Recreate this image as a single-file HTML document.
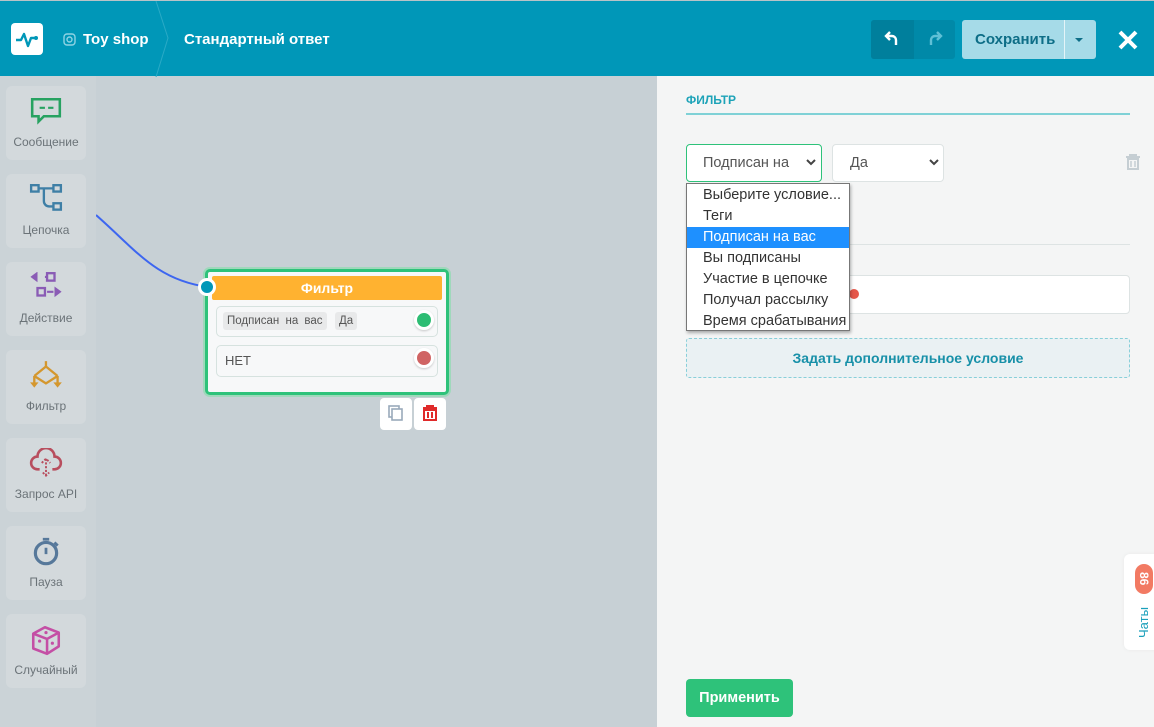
<!DOCTYPE html>
<html><head><meta charset="utf-8"><style>
*{box-sizing:border-box;margin:0;padding:0}
body{width:1154px;height:727px;overflow:hidden;font-family:"Liberation Sans","DejaVu Sans",sans-serif;background:#c7d0d5;position:relative}
.hdr{position:absolute;left:0;top:0;width:1154px;height:76px;background:#0097b8;border-top:1px solid #b9c3c7}
.abs{position:absolute}
.side{position:absolute;left:0;top:76px;width:96px;height:651px;background:#cbd3d7}
.tool{position:absolute;left:6px;width:80px;height:74px;background:#d3d9dc;border-radius:6px;text-align:center;font-size:12px;color:#6b7378}
.tool span{position:absolute;left:0;right:0;top:49px}
.tool svg{position:absolute;left:23px;top:10px}
.panel{position:absolute;left:657px;top:76px;width:497px;height:651px;background:#f4f5f5}
.opt{height:21px;line-height:21px;padding-left:16px;font-size:14.5px;color:#333}
</style></head><body>
<div class="hdr">
 <div class="abs" style="left:11px;top:22px;width:32px;height:32px;background:#fff;border-radius:4px">
  <svg width="32" height="32" viewBox="0 0 32 32"><path d="M5 17h5l3-6 4 12 3-8h5" fill="none" stroke="#0097b8" stroke-width="2.4" stroke-linejoin="round"/><circle cx="25" cy="15" r="2" fill="#0097b8"/></svg>
 </div>
 <svg class="abs" style="left:63px;top:32px" width="13" height="13" viewBox="0 0 13 13"><rect x="1" y="1" width="11" height="11" rx="3" fill="none" stroke="#8fd3e3" stroke-width="1.4"/><circle cx="6.5" cy="6.5" r="2.5" fill="none" stroke="#8fd3e3" stroke-width="1.4"/></svg>
 <div class="abs" style="left:83px;top:30px;color:#fff;font-size:15px;font-weight:bold">Toy shop</div>
 <svg class="abs" style="left:150px;top:0" width="20" height="76"><path d="M6 0L18 37L6 76" fill="none" stroke="#2aaac6" stroke-width="1"/></svg>
 <div class="abs" style="left:184px;top:30px;color:#fff;font-size:15px;font-weight:bold">Стандартный ответ</div>
 <div class="abs" style="left:871px;top:19px;width:84px;height:39px;background:#0089a8;border-radius:3px"></div>
 <div class="abs" style="left:871px;top:19px;width:43px;height:39px;background:#007f9c;border-radius:3px 0 0 3px"></div>
 <svg class="abs" style="left:884px;top:28px" width="18" height="20" viewBox="0 0 18 20"><path d="M6 3L2 7l4 4M2 7h6a4 4 0 0 1 4 4v5" fill="none" stroke="#fff" stroke-width="2.4"/></svg>
 <svg class="abs" style="left:925px;top:28px" width="18" height="20" viewBox="0 0 18 20"><path d="M12 3l4 4-4 4M16 7h-6a4 4 0 0 0-4 4v5" fill="none" stroke="#5fc0d6" stroke-width="2.4"/></svg>
 <div class="abs" style="left:962px;top:19px;width:134px;height:39px;background:#a6dbe8;border-radius:3px"></div>
 <div class="abs" style="left:1064px;top:19px;width:1px;height:39px;background:#e4f4f8"></div>
 <div class="abs" style="left:975px;top:30px;color:#0d6e87;font-size:15px;font-weight:bold">Сохранить</div>
 <div class="abs" style="left:1075px;top:37px;border-left:4px solid transparent;border-right:4px solid transparent;border-top:4px solid #0d6e87"></div>
 <svg class="abs" style="left:1117px;top:28px" width="22" height="22" viewBox="0 0 22 22"><path d="M3 3L19 19M19 3L3 19" stroke="#fff" stroke-width="4"/></svg>
</div>

<div class="side">
 <div class="tool" style="top:10px"><svg width="34" height="32" viewBox="0 0 32 30"><path d="M3 3h26v16H14l-5 5v-5H3z" fill="none" stroke="#27a261" stroke-width="2.4"/><path d="M10 11h5M18 11h5" stroke="#27a261" stroke-width="2"/></svg><span>Сообщение</span></div>
 <div class="tool" style="top:98px"><svg width="34" height="30" viewBox="0 0 32 28"><rect x="2" y="1" width="7" height="6" fill="none" stroke="#3e7fa6" stroke-width="2.2"/><rect x="23" y="1" width="7" height="6" fill="none" stroke="#3e7fa6" stroke-width="2.2"/><rect x="23" y="18" width="7" height="6" fill="none" stroke="#3e7fa6" stroke-width="2.2"/><path d="M9 4h14M14 4v12a5 5 0 0 0 5 5h4" fill="none" stroke="#3e7fa6" stroke-width="2.2"/></svg><span>Цепочка</span></div>
 <div class="tool" style="top:186px"><svg width="34" height="30" viewBox="0 0 32 28"><rect x="17" y="1" width="7" height="7" fill="none" stroke="#8a5cb5" stroke-width="2.2"/><rect x="8" y="15" width="7" height="7" fill="none" stroke="#8a5cb5" stroke-width="2.2"/><path d="M3 4.5l4-3v6zM15 4.5h2" fill="#8a5cb5" stroke="#8a5cb5" stroke-width="2"/><path d="M29 18.5l-4-3v6zM17 18.5h6" fill="#8a5cb5" stroke="#8a5cb5" stroke-width="2"/></svg><span>Действие</span></div>
 <div class="tool" style="top:274px"><svg width="36" height="32" viewBox="0 0 34 30"><path d="M16 1v5M16 6L5 15M16 6l11 9M5 15l11 7 11-7M5 15v7M27 15v7" fill="none" stroke="#d4972e" stroke-width="2.2"/><path d="M1 21h8l-4 5zM23 21h8l-4 5z" fill="#d4972e"/></svg><span>Фильтр</span></div>
 <div class="tool" style="top:362px"><svg width="34" height="32" viewBox="0 0 32 30"><path d="M10 20H8a6 6 0 0 1 0-12 8 8 0 0 1 16 0 6 6 0 0 1 0 12h-2" fill="none" stroke="#b84e5e" stroke-width="2.4"/><path d="M16 10v16M12 14l4-4 4 4M13 23l3 3 3-3" fill="none" stroke="#b84e5e" stroke-width="1.8" stroke-dasharray="2 1.5"/></svg><span>Запрос API</span></div>
 <div class="tool" style="top:450px"><svg width="34" height="32" viewBox="0 0 32 30"><circle cx="16" cy="16" r="10" fill="none" stroke="#56789a" stroke-width="3"/><path d="M16 11v6M13 3h6M24 6l3 3" stroke="#56789a" stroke-width="2.6"/></svg><span>Пауза</span></div>
 <div class="tool" style="top:538px"><svg width="34" height="32" viewBox="0 0 32 30"><path d="M4 9l11-6 13 5v13l-11 7-13-5z M4 9l13 5 11-6M17 14v14" fill="none" stroke="#c44fa5" stroke-width="2.4" stroke-linejoin="round"/><circle cx="10" cy="16" r="1.5" fill="#c44fa5"/><circle cx="22" cy="18" r="1.5" fill="#c44fa5"/><circle cx="16" cy="8" r="1.5" fill="#c44fa5"/></svg><span>Случайный</span></div>
</div>

<svg class="abs" style="left:96px;top:200px" width="120" height="100"><path d="M0 15C40 50 60 80 112 87" fill="none" stroke="#3d66f0" stroke-width="2"/></svg>

<div class="abs" style="left:205px;top:269px;width:244px;height:126px;background:#f7f8f9;border:3px solid #2ec27a;border-radius:5px;box-shadow:0 0 0 2px #9fd8bb"></div>
<div class="abs" style="left:212px;top:276px;width:230px;height:24px;background:#ffb230;border-radius:2px;color:#fff;font-weight:bold;font-size:14px;text-align:center;line-height:24px">Фильтр</div>
<div class="abs" style="left:198px;top:278px;width:18px;height:18px;border-radius:50%;background:#0097b8;border:3px solid #fff"></div>
<div class="abs" style="left:216px;top:306px;width:222px;height:31px;border:1px solid #d6e2df;border-radius:5px;background:#f7f8f9"></div>
<div class="abs" style="left:223px;top:312px;height:18px;padding:0 4px;background:#e8e9ea;border-radius:3px;font-size:11.5px;line-height:18px;color:#555;word-spacing:3px">Подписан на вас</div>
<div class="abs" style="left:335px;top:312px;height:18px;padding:0 4px;background:#e8e9ea;border-radius:3px;font-size:11.5px;line-height:18px;color:#555">Да</div>
<div class="abs" style="left:414px;top:310px;width:20px;height:20px;border-radius:50%;background:#2ebd74;border:3px solid #fff;box-shadow:0 1px 2px rgba(0,0,0,.2)"></div>
<div class="abs" style="left:216px;top:345px;width:222px;height:32px;border:1px solid #d6e2df;border-radius:5px;background:#f7f8f9;font-size:13px;color:#555;padding:7px 8px">НЕТ</div>
<div class="abs" style="left:414px;top:348px;width:20px;height:20px;border-radius:50%;background:#d06464;border:3px solid #fff;box-shadow:0 1px 2px rgba(0,0,0,.2)"></div>
<div class="abs" style="left:380px;top:398px;width:32px;height:32px;background:#fff;border-radius:4px"><svg width="32" height="32"><rect x="9" y="8" width="10" height="11" fill="none" stroke="#9ab" stroke-width="1.6"/><rect x="12" y="11" width="10" height="11" fill="#fff" stroke="#9ab" stroke-width="1.6"/></svg></div>
<div class="abs" style="left:414px;top:398px;width:32px;height:32px;background:#fff;border-radius:4px"><svg width="32" height="32"><path d="M9 10h14M13 10V8h6v2M10 12h12v10H10z M14 14v6M18 14v6" fill="none" stroke="#e02a2a" stroke-width="2"/></svg></div>

<div class="panel">
 <div class="abs" style="left:29px;top:17px;color:#1da3b8;font-size:12px;font-weight:bold">ФИЛЬТР</div>
 <div class="abs" style="left:29px;top:37px;width:444px;height:2px;background:#7fd1d6"></div>
 <div class="abs" style="left:29px;top:68px;width:136px;height:38px;border:1px solid #2ec27a;border-radius:4px;background:#fff;font-size:14.5px;color:#555;padding:10px 0 0 16px">Подписан на</div>
 <svg class="abs" style="left:149px;top:83px" width="10" height="8"><path d="M1 1l4 4 4-4" fill="none" stroke="#444" stroke-width="2"/></svg>
 <div class="abs" style="left:175px;top:68px;width:112px;height:38px;border:1px solid #dde3e3;border-radius:4px;background:#fff;font-size:14.5px;color:#555;padding:10px 0 0 17px">Да</div>
 <svg class="abs" style="left:272px;top:83px" width="10" height="8"><path d="M1 1l4 4 4-4" fill="none" stroke="#444" stroke-width="2"/></svg>
 <svg class="abs" style="left:468px;top:77px" width="16" height="18"><path d="M1 4h14M5 4V2h6v2M3 6h10v10H3z" fill="none" stroke="#c5ced3" stroke-width="2"/><path d="M6 8v6M10 8v6" stroke="#c5ced3" stroke-width="1.5"/></svg>
 <div class="abs" style="left:172px;top:168px;width:301px;height:1px;background:#dde3e3"></div>
 <div class="abs" style="left:29px;top:199px;width:444px;height:39px;border:1px solid #dde3e3;border-radius:4px;background:#fff"></div>
 <div class="abs" style="left:192px;top:213px;width:10px;height:10px;border-radius:50%;background:#e5574a"></div>
 <div class="abs" style="left:29px;top:262px;width:444px;height:40px;border:1px dashed #88cfd9;border-radius:3px;background:#eaf1f3;color:#1790a8;font-weight:bold;font-size:14px;text-align:center;line-height:38px">Задать дополнительное условие</div>
 <div class="abs" style="left:29px;top:603px;width:107px;height:38px;background:#2ec27a;border-radius:4px;color:#fff;font-weight:bold;font-size:14.5px;text-align:center;line-height:38px">Применить</div>
 <div class="abs" style="left:467px;top:478px;width:32px;height:96px;background:#fff;border-radius:6px 0 0 6px;box-shadow:0 0 4px rgba(0,0,0,.05)"></div>
 <div class="abs" style="left:478px;top:488px;width:18px;height:30px;background:#f27a63;border-radius:9px;color:#fff;font-size:12px;font-weight:bold;writing-mode:vertical-rl;text-align:center;line-height:18px">86</div>
 <div class="abs" style="left:479px;top:524px;writing-mode:vertical-rl;transform:rotate(180deg);color:#1aa0bb;font-size:13px;height:38px">Чаты</div>
</div>

<div class="abs" style="left:686px;top:183px;width:164px;height:148px;background:#fff;border:1px solid #777;box-shadow:1px 2px 3px rgba(0,0,0,.3);padding-top:1px">
 <div class="opt">Выберите условие...</div>
 <div class="opt">Теги</div>
 <div class="opt" style="background:#1e90ff;color:#fff">Подписан на вас</div>
 <div class="opt">Вы подписаны</div>
 <div class="opt">Участие в цепочке</div>
 <div class="opt">Получал рассылку</div>
 <div class="opt">Время срабатывания</div>
</div>
</body></html>
